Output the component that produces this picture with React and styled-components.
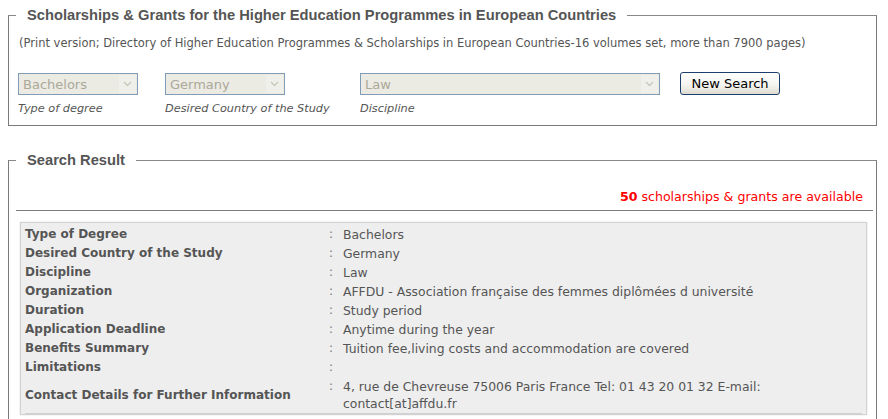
import React from 'react'
import styled, { createGlobalStyle } from 'styled-components'

const GlobalStyle = createGlobalStyle`
  html, body {
    margin: 0;
    padding: 0;
    background: #fff;
  }
  body {
    font-family: "DejaVu Sans", Verdana, sans-serif;
    color: #555;
  }
`

const Page = styled.div`
  padding: 7px 11px 0 8px;
`

const Box = styled.fieldset`
  margin: 0 0 ${p => p.$gap || 0}px 0;
  padding: 0 9px ${p => p.$bottom || 0}px 9px;
  border: 1px solid #7a7a7a;
  border-top-color: #888;
  min-width: 0;
`

const Legend = styled.legend`
  margin-left: -2px;
  padding: 0 11px;
  font-family: "Liberation Sans", Arial, sans-serif;
  font-weight: bold;
  font-size: 14.7px;
  line-height: 16px;
  color: #555;
`

const Note = styled.p`
  margin: 13px 0 0 1px;
  font-size: 11.5px;
  line-height: 14px;
  color: #555;
`

const FilterRow = styled.div`
  display: flex;
  align-items: flex-start;
  margin-top: 23px;
  padding-bottom: 9px;
`

const Field = styled.div`
  width: ${p => p.$w}px;
  display: flex;
  flex-direction: column;
`

const Select = styled.div`
  width: ${p => p.$w}px;
  height: 22px;
  box-sizing: border-box;
  border: 1px solid #7f9db9;
  background: #ebebe4;
  display: flex;
  align-items: center;
  justify-content: space-between;
  font-size: 13px;
  color: #aca899;
  padding-left: 4px;
`

const Arrow = styled.span`
  width: 17px;
  height: 18px;
  margin-right: 1px;
  background: #f0f0ea;
  display: flex;
  align-items: center;
  justify-content: center;
`

const FieldLabel = styled.span`
  margin-top: 7px;
  font-size: 11.3px;
  font-style: italic;
  line-height: 14px;
  color: #555;
`

const Button = styled.button`
  width: 100px;
  height: 23px;
  margin-top: -1px;
  border: 1px solid #1c3f6e;
  border-radius: 3px;
  background: linear-gradient(#ffffff, #f3f3ee 60%, #dedbd0);
  font-family: "DejaVu Sans", Verdana, sans-serif;
  font-size: 13px;
  color: #000;
  padding: 0;
`

const Count = styled.div`
  text-align: right;
  padding: 21px 4px 0 0;
  font-size: 12.6px;
  line-height: 16px;
  color: #f00;
  b {
    font-weight: bold;
  }
`

const Rule = styled.hr`
  margin: 5px -6px 0 -2px;
  border: 0;
  border-top: 1px solid #7d7d7d;
`

const Details = styled.div`
  margin: 11px 0 0 2px;
  border: 1px solid #d2d2d2;
  background: #eeeeee;
  box-shadow: 0 0 2px rgba(0, 0, 0, 0.12);
  padding: 2px 4px 0 4px;
`

const Table = styled.table`
  width: 100%;
  border-collapse: collapse;
  border-bottom: 1px solid #d0d0d0;
  font-size: 12px;
  line-height: 17px;
`

const Label = styled.td`
  width: 304px;
  padding: 1px 0;
  font-weight: bold;
  color: #555;
  vertical-align: middle;
`

const Colon = styled.td`
  width: 13px;
  padding: 1px 0;
  vertical-align: top;
  color: #777;
`

const Value = styled.td`
  padding: 1px 0 1px 1px;
  font-size: 12.4px;
  color: #555;
`

const Chevron = () => (
  <svg width="9" height="6" viewBox="0 0 9 6">
    <path d="M1 1 L4.5 4.5 L8 1" fill="none" stroke="#c9c7ba" strokeWidth="1.3" />
  </svg>
)

const rows = [
  ['Type of Degree', 'Bachelors'],
  ['Desired Country of the Study', 'Germany'],
  ['Discipline', 'Law'],
  ['Organization', 'AFFDU - Association française des femmes diplômées d université'],
  ['Duration', 'Study period'],
  ['Application Deadline', 'Anytime during the year'],
  ['Benefits Summary', 'Tuition fee,living costs and accommodation are covered'],
  ['Limitations', ''],
  ['Contact Details for Further Information', <>4, rue de Chevreuse 75006 Paris France Tel: 01 43 20 01 32 E-mail:<br />contact[at]affdu.fr</>]
]

export default function App () {
  return (
    <Page>
      <GlobalStyle />
      <Box $gap={26}>
        <Legend>Scholarships &amp; Grants for the Higher Education Programmes in European Countries</Legend>
        <Note>(Print version; Directory of Higher Education Programmes &amp; Scholarships in European Countries-16 volumes set, more than 7900 pages)</Note>
        <FilterRow>
          <Field $w={147}>
            <Select $w={120}>Bachelors<Arrow><Chevron /></Arrow></Select>
            <FieldLabel>Type of degree</FieldLabel>
          </Field>
          <Field $w={195}>
            <Select $w={120}>Germany<Arrow><Chevron /></Arrow></Select>
            <FieldLabel>Desired Country of the Study</FieldLabel>
          </Field>
          <Field $w={320}>
            <Select $w={300}>Law<Arrow><Chevron /></Arrow></Select>
            <FieldLabel>Discipline</FieldLabel>
          </Field>
          <Button>New Search</Button>
        </FilterRow>
      </Box>
      <Box $bottom={20}>
        <Legend>Search Result</Legend>
        <Count><b>50</b> scholarships &amp; grants are available</Count>
        <Rule />
        <Details>
          <Table>
            <tbody>
              {rows.map(([k, v]) => (
                <tr key={k}>
                  <Label>{k}</Label>
                  <Colon>:</Colon>
                  <Value>{v}</Value>
                </tr>
              ))}
            </tbody>
          </Table>
        </Details>
      </Box>
    </Page>
  )
}
